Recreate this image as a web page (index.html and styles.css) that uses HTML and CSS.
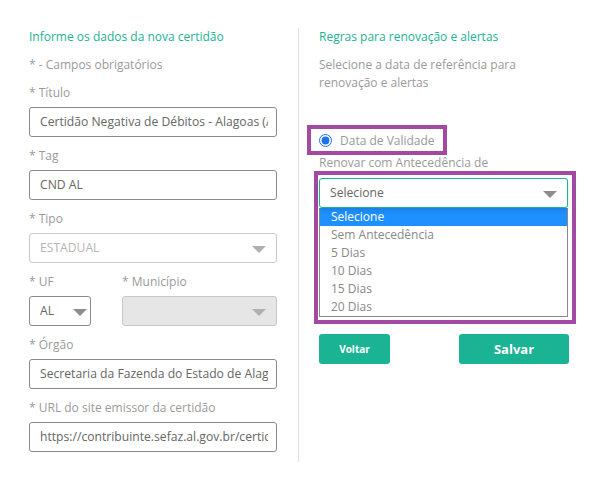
FILE: index.html
```html
<!DOCTYPE html>
<html lang="pt-BR">
<head>
    <meta charset="UTF-8">
    <meta name="viewport" content="width=device-width, initial-scale=1.0">
    <title>Nova Certidão</title>
    <link rel="stylesheet" href="styles.css">
</head>
<body>
    <div class="modal">
        <section class="col col-left">
            <h2 class="section-title">Informe os dados da nova certidão</h2>
            <p class="hint">* - Campos obrigatórios</p>

            <div class="form-group">
                <label>* Título</label>
                <div class="field"><span class="value">Certidão Negativa de Débitos - Alagoas (AL)</span></div>
            </div>
            <div class="form-group">
                <label>* Tag</label>
                <div class="field"><span class="value">CND AL</span></div>
            </div>
            <div class="form-group">
                <label>* Tipo</label>
                <div class="field select disabled"><span class="value">ESTADUAL</span><span class="caret"></span></div>
            </div>
            <div class="form-row">
                <div class="form-group uf">
                    <label>* UF</label>
                    <div class="field select"><span class="value">AL</span><span class="caret"></span></div>
                </div>
                <div class="form-group municipio">
                    <label>* Município</label>
                    <div class="field select locked"><span class="caret"></span></div>
                </div>
            </div>
            <div class="form-group">
                <label>* Órgão</label>
                <div class="field"><span class="value">Secretaria da Fazenda do Estado de Alagoas</span></div>
            </div>
            <div class="form-group last">
                <label>* URL do site emissor da certidão</label>
                <div class="field"><span class="value">https://contribuinte.sefaz.al.gov.br/certidao</span></div>
            </div>
        </section>

        <section class="col col-right">
            <h2 class="section-title">Regras para renovação e alertas</h2>
            <p class="hint">Selecione a data de referência para renovação e alertas</p>

            <div class="mark mark-radio">
                <label class="radio"><input type="radio" name="ref" checked> Data de Validade</label>
            </div>
            <div class="renew-label">Renovar com Antecedência de</div>
            <div class="mark mark-select">
                <div class="field select focus"><span class="value">Selecione</span><span class="caret"></span></div>
                <ul class="dropdown">
                    <li class="active">Selecione</li>
                    <li>Sem Antecedência</li>
                    <li>5 Dias</li>
                    <li>10 Dias</li>
                    <li>15 Dias</li>
                    <li>20 Dias</li>
                </ul>
            </div>

            <div class="actions">
                <button type="button" class="btn btn-small">Voltar</button>
                <button type="button" class="btn btn-large">Salvar</button>
            </div>
        </section>
    </div>
</body>
</html>
```

FILE: styles.css
```css
body {
    font-family: "Open Sans", Arial, sans-serif;
    font-size: 12px;
    margin: 0;
    padding: 0;
    background-color: #fff;
    color: #999;
}
.modal {
    display: flex;
    align-items: flex-start;
    padding: 28px 0 0 29px;
}
.col {
    box-sizing: border-box;
}
.col-left {
    width: 270px;
    padding-right: 21px;
    padding-bottom: 10px;
    border-right: 1px solid #e2e2e2;
}
.col-right {
    width: 270px;
    padding-left: 20px;
}
.section-title {
    margin: 0;
    font-size: 12px;
    font-weight: normal;
    line-height: 18px;
    color: #1ab394;
}
.hint {
    margin: 10px 0 10px;
    line-height: 18px;
    color: #9a9a9a;
}
.form-group {
    margin-bottom: 10px;
}
.form-group.last {
    margin-bottom: 0;
}
.form-group label {
    display: block;
    line-height: 18px;
    margin-bottom: 5px;
    color: #9a9a9a;
}
.field {
    position: relative;
    display: flex;
    box-sizing: border-box;
    height: 30px;
    line-height: 28px;
    padding: 0 8px 0 10px;
    border: 1px solid #8a8a8a;
    border-radius: 3px;
    color: #666;
    font-size: 12.15px;
    background: #fff;
}
.field .value {
    flex: 1;
    min-width: 0;
    white-space: nowrap;
    overflow: hidden;
}
.field.select {
    padding-right: 30px;
}
.field.disabled {
    border-color: #c8c8c8;
    color: #b5b5b5;
}
.field.locked {
    border-color: #c8c8c8;
    background: #e6e6e6;
}
.caret {
    position: absolute;
    right: 10px;
    top: 12px;
    width: 0;
    height: 0;
    border-left: 7px solid transparent;
    border-right: 7px solid transparent;
    border-top: 7px solid #8c8c8c;
}
.field.disabled .caret,
.field.locked .caret {
    border-top-color: #b0b0b0;
}
.form-row {
    display: flex;
    gap: 31px;
}
.uf {
    width: 62px;
}
.uf .caret {
    right: 3px;
}
.municipio {
    flex: 1;
}
.mark {
    box-sizing: border-box;
    border: 4px solid #a349a4;
}
.mark-radio {
    width: 140px;
    height: 30px;
    margin: 33px 0 0 -12px;
    padding-left: 8px;
}
.radio {
    display: flex;
    align-items: center;
    gap: 8px;
    height: 22px;
    color: #999;
}
.radio input {
    margin: 0;
    width: 13px;
    height: 13px;
    accent-color: #1a73e8;
}
.renew-label {
    line-height: 16px;
    margin-top: 0;
    color: #9a9a9a;
}
.mark-select {
    width: 262px;
    margin: 0 0 0 -5px;
    padding: 3px 4px 3px 1px;
}
.field.focus {
    border-color: #1ab394;
    box-shadow: 0 2px 4px rgba(0, 0, 0, 0.15);
}
.dropdown {
    list-style: none;
    margin: 0;
    padding: 0;
    border: 1px solid #8a8a8a;
    border-top: none;
    background: #fff;
}
.dropdown li {
    height: 18px;
    line-height: 18px;
    padding-left: 11px;
    color: #888;
}
.dropdown li.active {
    background-color: #1e90ff;
    color: #fff;
}
.actions {
    display: flex;
    justify-content: space-between;
    width: 250px;
    margin-top: 10px;
}
.btn {
    height: 30px;
    border: none;
    border-radius: 3px;
    background-color: #1ab394;
    color: #fff;
    font-family: "Open Sans", Arial, sans-serif;
    font-weight: bold;
    cursor: pointer;
}
.btn-small {
    width: 71px;
    font-size: 10px;
}
.btn-large {
    width: 110px;
    font-size: 13px;
}
```
